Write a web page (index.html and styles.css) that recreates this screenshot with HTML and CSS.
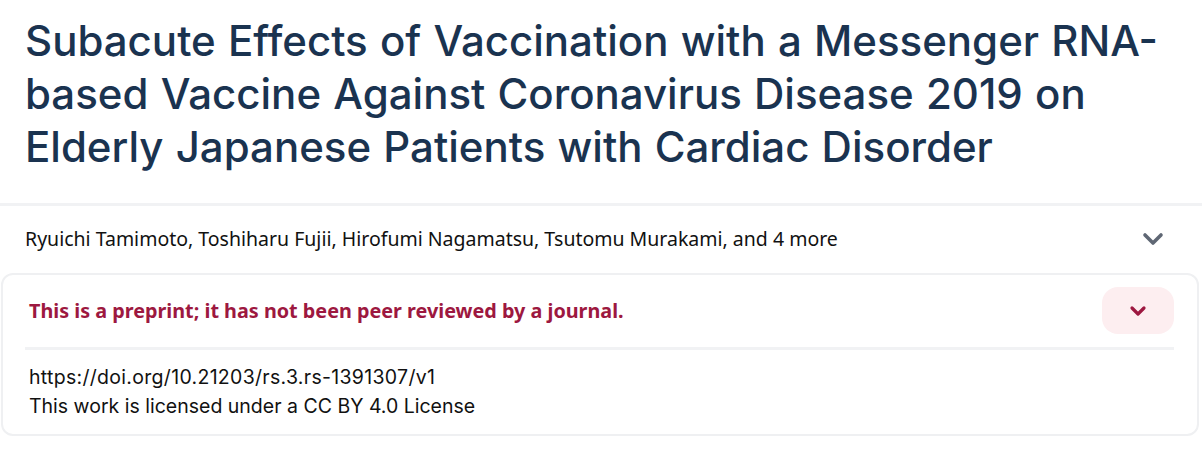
FILE: index.html
```html
<!DOCTYPE html>
<html lang="en">
<head>
<meta charset="utf-8">
<title>Preprint</title>
<link rel="stylesheet" href="styles.css">
</head>
<body>
<header class="title-block">
  <h1 class="title">Subacute Effects of Vaccination with a Messenger RNA-based Vaccine Against Coronavirus Disease 2019 on Elderly Japanese Patients with Cardiac Disorder</h1>
</header>
<div class="authors">
  <span class="authors-text">Ryuichi Tamimoto, Toshiharu Fujii, Hirofumi Nagamatsu, Tsutomu Murakami, and 4 more</span>
  <svg class="chev-gray" width="22" height="14" viewBox="0 0 22 14"><path d="M3 3 L11 11 L19 3" fill="none" stroke="#5f6774" stroke-width="3.6" stroke-linecap="round" stroke-linejoin="round"/></svg>
</div>
<section class="card">
  <div class="card-head">
    <span class="notice">This is a preprint; it has not been peer reviewed by a journal.</span>
    <button class="toggle" type="button" aria-label="Expand">
      <svg width="18" height="12" viewBox="0 0 18 12"><path d="M3 3 L9 9 L15 3" fill="none" stroke="#9d1840" stroke-width="3.2" stroke-linecap="round" stroke-linejoin="round"/></svg>
    </button>
  </div>
  <div class="divider"></div>
  <div class="meta">
    <div class="doi">https://doi.org/10.21203/rs.3.rs-1391307/v1</div>
    <div>This work is licensed under a CC BY 4.0 License</div>
  </div>
</section>
</body>
</html>
```

FILE: styles.css
```css
html, body {
  margin: 0;
  padding: 0;
  background: #ffffff;
}

.title-block {
  padding: 14px 25px 30px 25px;
  border-bottom: 3px solid #f1f2f4;
}

.title {
  margin: 0;
  font-family: "Inter", "Liberation Sans", sans-serif;
  font-weight: 500;
  font-size: 42px;
  line-height: 53px;
  color: #1a3350;
  word-spacing: 1px;
}

.authors {
  display: flex;
  align-items: center;
  justify-content: space-between;
  height: 65px;
  padding: 0 38px 0 25px;
}

.authors-text {
  font-family: "Noto Sans", "Open Sans", sans-serif;
  font-size: 19.5px;
  color: #111111;
}

.chev-gray {
  display: block;
}

.card {
  margin: 2px 3px 0 1px;
  border: 2px solid #eff0f2;
  border-radius: 12px;
  padding: 12px 23px 13px 22px;
}

.card-head {
  display: flex;
  align-items: center;
  justify-content: space-between;
}

.notice {
  padding-left: 4px;
  font-family: "Noto Sans", "Open Sans", sans-serif;
  font-weight: 700;
  font-size: 19.8px;
  color: #9d1840;
}

.toggle {
  width: 72px;
  height: 47px;
  border: 0;
  border-radius: 16px;
  background: #fdeef0;
  display: flex;
  align-items: center;
  justify-content: center;
  padding: 0;
}

.toggle svg {
  display: block;
}

.divider {
  height: 3px;
  background: #f1f2f4;
  margin-top: 13px;
}

.meta {
  padding: 13px 0 0 4px;
  font-family: "Inter", "Liberation Sans", sans-serif;
  font-size: 19.5px;
  line-height: 29px;
  color: #111111;
}

.doi {
  letter-spacing: 0.3px;
}
```
